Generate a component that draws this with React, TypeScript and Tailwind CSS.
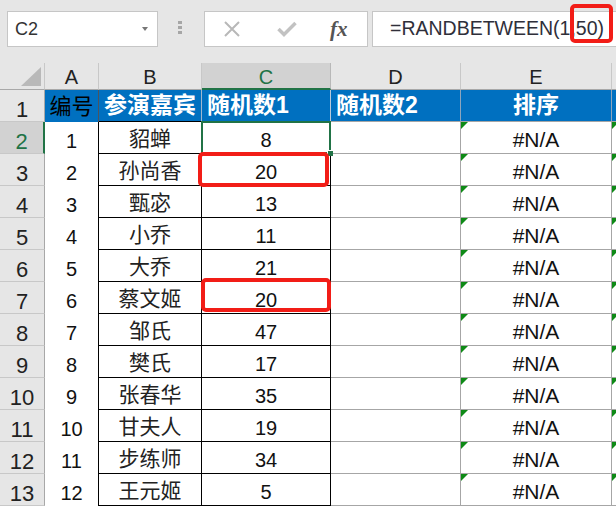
import React from "react";

const rows = [
  { id: 1, name: "貂蝉", value: 8 },
  { id: 2, name: "孙尚香", value: 20 },
  { id: 3, name: "甄宓", value: 13 },
  { id: 4, name: "小乔", value: 11 },
  { id: 5, name: "大乔", value: 21 },
  { id: 6, name: "蔡文姬", value: 20 },
  { id: 7, name: "邹氏", value: 47 },
  { id: 8, name: "樊氏", value: 17 },
  { id: 9, name: "张春华", value: 35 },
  { id: 10, name: "甘夫人", value: 19 },
  { id: 11, name: "步练师", value: 34 },
  { id: 12, name: "王元姬", value: 5 },
];

function ErrorFlag() {
  return (
    <span className="absolute left-0 top-0 h-0 w-0 border-t-[7px] border-r-[7px] border-t-[#0e8a16] border-r-transparent" />
  );
}

function FormulaBar() {
  return (
    <div className="relative flex h-[63px] items-start bg-[#e6e6e6] pl-[7px] pt-[11px]">
      {/* name box */}
      <div className="flex h-[36px] w-[151px] items-center justify-between border border-[#c6c6c6] bg-white pl-[7px] pr-[9px]">
        <span className="text-[18px] text-[#333]">C2</span>
        <span className="h-0 w-0 border-x-[3px] border-t-[4px] border-x-transparent border-t-[#777]" />
      </div>

      {/* grip dots */}
      <div className="ml-[20px] mt-[10px] flex flex-col gap-[2px]">
        <span className="h-[3px] w-[4px] bg-[#a6a6a6]" />
        <span className="h-[3px] w-[4px] bg-[#a6a6a6]" />
        <span className="h-[3px] w-[4px] bg-[#a6a6a6]" />
      </div>

      {/* cancel / enter / fx */}
      <div className="ml-[22px] flex h-[36px] w-[164px] items-center border border-[#c6c6c6] bg-white">
        <svg className="ml-[18px]" width="18" height="16" viewBox="0 0 18 16">
          <path d="M2 1 L16 15 M16 1 L2 15" stroke="#b8b8b8" strokeWidth="2" fill="none" />
        </svg>
        <svg className="ml-[36px]" width="20" height="16" viewBox="0 0 20 16">
          <path d="M1.5 8 L7 13.5 L18.5 2" stroke="#c2c2c2" strokeWidth="3.5" fill="none" />
        </svg>
        <span className="ml-[33px] font-['Liberation_Serif',serif] text-[21px] font-bold italic leading-none text-[#555]">
          fx
        </span>
      </div>

      {/* formula input */}
      <div className="ml-[4px] flex h-[36px] flex-1 items-center border-y border-l border-[#c6c6c6] bg-white pl-[17px]">
        <span className="whitespace-nowrap text-[19.5px] text-[#2f2f3a]">=RANDBETWEEN(1,50)</span>
      </div>

      <div className="absolute left-[570px] top-[4px] h-[39px] w-[43px] rounded-[5px] border-[4px] border-[#f21d17]" />
    </div>
  );
}

export default function App() {
  const colHead = "flex items-center justify-center pt-[2px] text-[20px] text-[#222] bg-[#e6e6e6] border-r border-b border-r-[#c8c8c8] border-b-[#a8a8a8]";

  return (
    <div className="h-[508px] w-[616px] overflow-hidden bg-white font-['Liberation_Sans','Noto_Sans_CJK_SC',sans-serif]">
      <FormulaBar />

      <div className="grid grid-cols-[45px_54px_103px_129px_130px_151px_1fr] grid-rows-[27px_repeat(13,32px)]">
        {/* column headers */}
        <div className="relative bg-[#e6e6e6] border-r border-b border-r-[#c8c8c8] border-b-[#a8a8a8]">
          <svg className="absolute bottom-[3px] right-[3px]" width="20" height="19" viewBox="0 0 20 19">
            <polygon points="20,0 20,19 0,19" fill="#b9b9b9" />
          </svg>
        </div>
        <div className={colHead}>A</div>
        <div className={colHead}>B</div>
        <div className="flex items-center justify-center pt-[2px] text-[20px] text-[#217346] bg-[#d2d2d2] border-r border-r-[#b8b8b8] border-b-2 border-b-[#217346]">
          C
        </div>
        <div className={colHead}>D</div>
        <div className={colHead}>E</div>
        <div className="bg-[#e6e6e6] border-b border-b-[#a8a8a8]" />

        {/* row 1: blue title row */}
        <div className="flex items-center justify-center pt-[7px] text-[22px] text-[#222] bg-[#e6e6e6] border-r border-b border-r-[#a8a8a8] border-b-[#c8c8c8]">
          1
        </div>
        <div className="flex items-center justify-center bg-[#0070c0] text-[22px] text-black border-r border-r-[#4a5560] whitespace-nowrap overflow-hidden">
          编号
        </div>
        <div className="flex items-center justify-center bg-[#0070c0] text-[23px] font-bold text-white border-r border-b border-r-[#9fb7cf] border-b-black whitespace-nowrap">
          参演嘉宾
        </div>
        <div className="flex items-center bg-[#0070c0] pl-[5px] text-[23px] font-bold text-white border-r border-b border-r-[#b7c9da] border-b-black whitespace-nowrap">
          随机数1
        </div>
        <div className="flex items-center bg-[#0070c0] pl-[5px] text-[23px] font-bold text-white border-r border-b border-r-[#8da5bd] border-b-[#a6a6a6] whitespace-nowrap">
          随机数2
        </div>
        <div className="flex items-center justify-center bg-[#0070c0] text-[23px] font-bold text-white border-r border-b border-r-[#8da5bd] border-b-[#a6a6a6]">
          排序
        </div>
        <div className="bg-[#0070c0] border-b border-b-[#a6a6a6]" />

        {/* data rows */}
        {rows.map((r, i) => {
          const rowNo = i + 2;
          const selected = rowNo === 2;
          return (
            <React.Fragment key={r.id}>
              <div
                className={
                  selected
                    ? "flex items-center justify-center pt-[8px] text-[22px] text-[#217346] bg-[#d2d2d2] border-b border-b-[#c8c8c8] border-r-2 border-r-[#217346]"
                    : "flex items-center justify-center pt-[8px] text-[22px] text-[#222] bg-[#e6e6e6] border-r border-b border-r-[#a8a8a8] border-b-[#c8c8c8]"
                }
              >
                {rowNo}
              </div>
              <div className="flex items-center justify-center pt-[5px] text-[20px] text-[#111] border-r border-r-black">
                {r.id}
              </div>
              <div className="flex items-center justify-center pt-[3px] text-[21px] text-[#222] border-r border-b border-black">
                {r.name}
              </div>
              <div className="relative flex items-center justify-center pt-[5px] text-[20px] text-[#111] border-r border-b border-black">
                {r.value}
                {selected && (
                  <>
                    <span className="absolute z-10 -inset-[1px] border-2 border-[#217346]" />
                    <span className="absolute z-10 -bottom-[3px] -right-[3px] h-[6px] w-[6px] bg-[#217346] border-l border-t border-white" />
                  </>
                )}
                {rowNo === 3 && (
                  <span className="absolute z-10 -left-[4px] right-[1px] -top-[2px] -bottom-[2px] rounded-[5px] border-[4px] border-[#f21d17]" />
                )}
                {rowNo === 7 && (
                  <span className="absolute z-10 -left-[1px] -right-[1px] -top-[4px] bottom-[1px] rounded-[5px] border-[4px] border-[#f21d17]" />
                )}
              </div>
              <div className="border-r border-b border-[#a6a6a6]" />
              <div className="relative flex items-center justify-center pt-[5px] text-[21px] text-[#111] border-r border-b border-[#a6a6a6]">
                <ErrorFlag />
                #N/A
              </div>
              <div className="relative border-b border-[#a6a6a6]">
                <ErrorFlag />
              </div>
            </React.Fragment>
          );
        })}
      </div>
    </div>
  );
}
